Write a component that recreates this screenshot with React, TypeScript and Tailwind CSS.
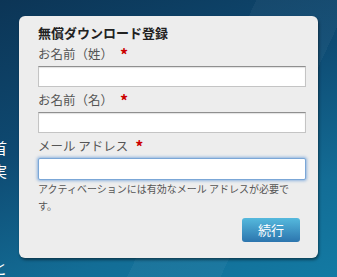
const jp = "font-['Noto_Sans_CJK_JP','Noto_Sans',sans-serif]";

function Field({ label, focused }: { label: string; focused?: boolean }) {
  return (
    <div className="flex flex-col">
      <label className="flex h-[18px] items-center text-[12.5px] leading-none text-[#555]">
        {label}
        <span className="ml-[7px] text-[16px] font-bold text-[#c00]">*</span>
      </label>
      <input
        className={
          focused
            ? "mt-[3px] h-[22px] w-full rounded-[2px] border border-[#7ba7d7] bg-white shadow-[0_0_3px_1px_rgba(82,144,214,0.6)] outline-none"
            : "mt-[3px] h-[21px] w-full border border-[#c4c4c4] border-t-[#8f8f8f] bg-white shadow-[inset_0_1px_1px_rgba(0,0,0,0.12)] outline-none"
        }
      />
    </div>
  );
}

export default function App() {
  return (
    <div
      className={`relative h-[277px] w-[337px] overflow-hidden bg-[linear-gradient(160deg,#0c3556_0%,#0e4a72_40%,#136d96_75%,#137aa3_100%)] ${jp}`}
    >
      <div className="absolute left-0 top-0 h-full w-full bg-[linear-gradient(115deg,transparent_55%,rgba(255,255,255,0.04)_55%,rgba(255,255,255,0.04)_75%,transparent_75%)]" />
      <div className="absolute left-[-8px] top-[138px] flex flex-col gap-[4px] text-[15px] leading-[19px] text-white">
        <span>首</span>
        <span>実</span>
      </div>
      <div className="absolute left-[-8px] top-[258px] text-[15px] leading-[19px] text-white">と</div>

      <div className="relative ml-[19px] mt-[16px] w-[299px] rounded-[6px] bg-[#ededed] pb-[16px] pl-[19px] pr-[12px] pt-[9px] shadow-[1px_2px_3px_rgba(0,0,0,0.45)]">
        <h2 className="text-[13px] font-bold leading-[16px] text-[#222]">無償ダウンロード登録</h2>
        <div className="mt-[4px] flex flex-col gap-[4px]">
          <Field label="お名前（姓）" />
          <Field label="お名前（名）" />
          <Field label="メール アドレス" focused />
        </div>
        <p className="max-w-[262px] text-[10px] leading-[17px] text-[#555]">
          アクティベーションには有効なメール アドレスが必要です。
        </p>
        <div className="mt-[4px] flex justify-end">
          <button className="mr-[6px] h-[24px] w-[58px] rounded-[3px] bg-[linear-gradient(#55b9dd,#2c75ae)] text-[13px] text-white">
            続行
          </button>
        </div>
      </div>
    </div>
  );
}
